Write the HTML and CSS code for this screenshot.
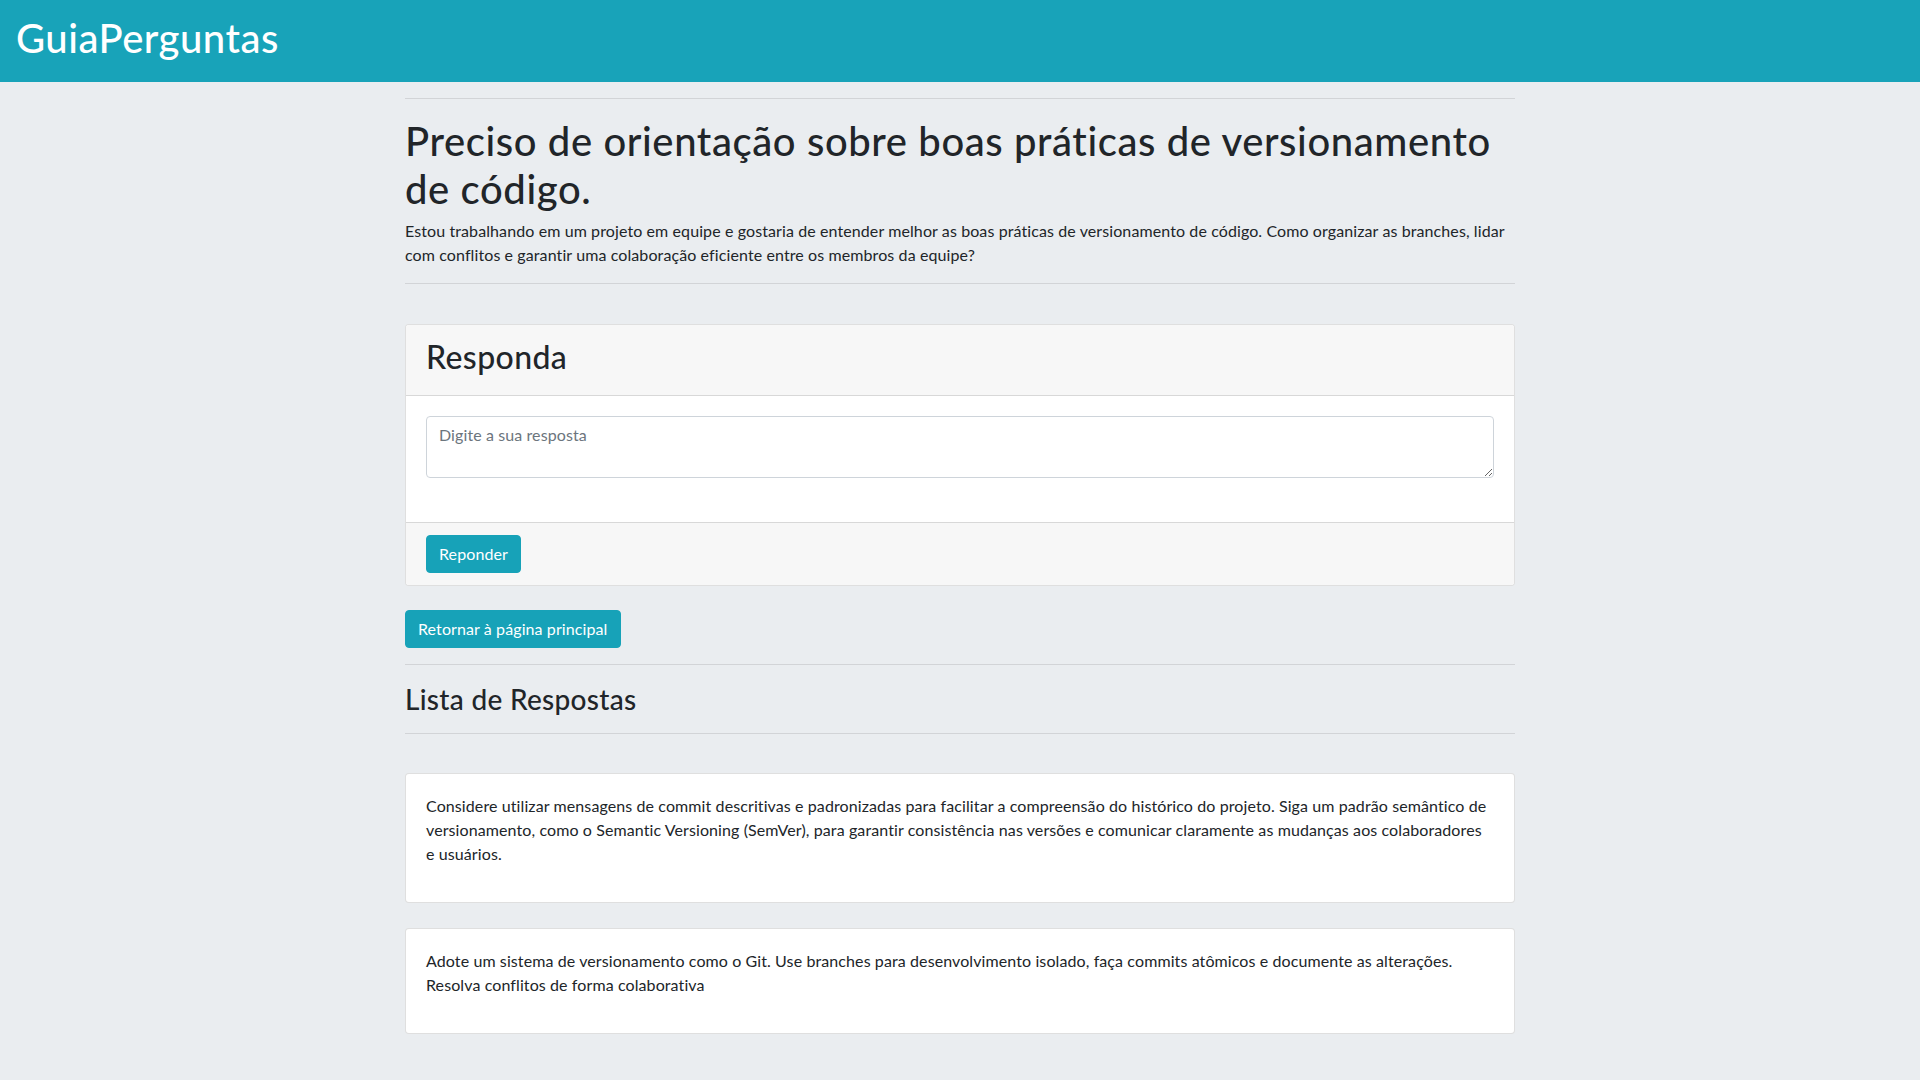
FILE: index.html
```html
<!DOCTYPE html>
<html lang="pt-BR">
<head>
<meta charset="utf-8">
<title>GuiaPerguntas</title>
<link rel="stylesheet" href="styles.css">
</head>
<body>
<nav class="navbar">
  <a class="brand" href="#">GuiaPerguntas</a>
</nav>
<main class="container">
  <hr class="rule">
  <h1 class="title">Preciso de orientação sobre boas práticas de versionamento de código.</h1>
  <p class="lead">Estou trabalhando em um projeto em equipe e gostaria de entender melhor as boas práticas de versionamento de código. Como organizar as branches, lidar com conflitos e garantir uma colaboração eficiente entre os membros da equipe?</p>
  <hr class="rule">
  <form class="card reply-card">
    <div class="card-header"><h2 class="card-title">Responda</h2></div>
    <div class="card-body reply-body">
      <textarea class="form-control" rows="2" placeholder="Digite a sua resposta"></textarea>
    </div>
    <div class="card-footer">
      <button type="button" class="btn">Reponder</button>
    </div>
  </form>
  <a class="btn btn-back" href="#">Retornar à página principal</a>
  <hr class="rule">
  <h3 class="list-title">Lista de Respostas</h3>
  <hr class="rule rule-list">
  <div class="answers">
    <div class="card"><div class="card-body"><p class="answer">Considere utilizar mensagens de commit descritivas e padronizadas para facilitar a compreensão do histórico do projeto. Siga um padrão semântico de versionamento, como o Semantic Versioning (SemVer), para garantir consistência nas versões e comunicar claramente as mudanças aos colaboradores e usuários.</p></div></div>
    <div class="card"><div class="card-body"><p class="answer">Adote um sistema de versionamento como o Git. Use branches para desenvolvimento isolado, faça commits atômicos e documente as alterações. Resolva conflitos de forma colaborativa</p></div></div>
  </div>
</main>
</body>
</html>
```
FILE: styles.css
```css
* { box-sizing: border-box; }
html, body { margin: 0; padding: 0; }
body {
  background: #eaedf0;
  color: #212529;
  font-family: Lato, "Open Sans", "Liberation Sans", sans-serif;
  font-size: 16px;
  line-height: 1.5;
  letter-spacing: 0.1px;
  min-height: 1080px;
}
.navbar {
  height: 82px;
  background: #18a3b9;
  display: flex;
  align-items: center;
  padding: 0 16px;
}
.brand {
  color: #fff;
  text-decoration: none;
  font-size: 40px;
  line-height: 1.2;
  font-weight: 500;
  letter-spacing: 0.5px;
  margin-top: -6px;
}
.container {
  width: 1110px;
  margin: 0 auto;
  padding-bottom: 40px;
}
.rule {
  border: 0;
  border-top: 1px solid rgba(0,0,0,.1);
  margin: 16px 0;
}
.title {
  font-size: 40px;
  font-weight: 500;
  line-height: 1.2;
  letter-spacing: 0.6px;
  padding-top: 2px;
  margin: 0 0 6px;
}
.lead {
  margin: 0 0 16px;
  line-height: 24px;
}
.card {
  background: #fff;
  border: 1px solid rgba(0,0,0,.125);
  border-radius: 4px;
  overflow: hidden;
}
.reply-card { margin: 40px 0 24px; }
.card-header {
  background: #f7f7f7;
  border-bottom: 1px solid rgba(0,0,0,.125);
  padding: 12px 20px;
}
.card-title {
  font-size: 32px;
  font-weight: 500;
  line-height: 1.2;
  letter-spacing: 0.4px;
  padding-top: 1px;
  margin: 0 0 7px;
}
.card-body { padding: 20px; }
.reply-body { padding-bottom: 44px; }
.form-control {
  display: block;
  width: 100%;
  height: 62px;
  padding: 6px 12px;
  font-family: inherit;
  font-size: 16px;
  line-height: 24px;
  letter-spacing: 0.1px;
  color: #495057;
  background: #fff;
  border: 1px solid #ced4da;
  border-radius: 4px;
  resize: vertical;
}
.form-control::placeholder { color: #6c757d; }
.card-footer {
  background: #f7f7f7;
  border-top: 1px solid rgba(0,0,0,.125);
  padding: 12px 20px;
}
.btn {
  display: inline-block;
  background: #17a2b8;
  color: #fff;
  border: 1px solid #17a2b8;
  border-radius: 4px;
  padding: 6px 12px;
  font-family: inherit;
  font-size: 16px;
  line-height: 24px;
  letter-spacing: 0.1px;
  text-decoration: none;
  cursor: pointer;
}
.list-title {
  font-size: 28px;
  font-weight: 500;
  line-height: 1.2;
  letter-spacing: 0.3px;
  padding-top: 2px;
  margin: 0 0 8px;
}
.rule-list { margin-bottom: 39px; }
.answers {
  display: flex;
  flex-direction: column;
  gap: 25px;
}
.answer {
  margin: 0 0 16px;
  line-height: 24px;
}
```
